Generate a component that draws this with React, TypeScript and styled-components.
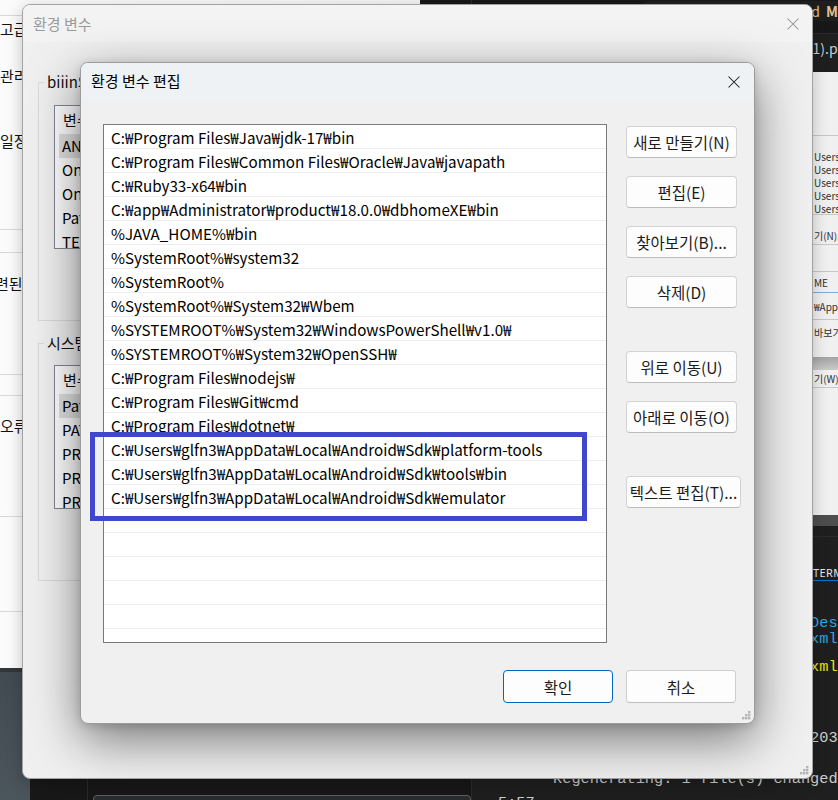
import React from 'react';
import styled, { createGlobalStyle } from 'styled-components';

const KR = `"Noto Sans CJK KR", "Noto Sans", sans-serif`;
const MONO = `"Liberation Mono", "DejaVu Sans Mono", monospace`;

const GlobalStyle = createGlobalStyle`
  html, body { margin: 0; padding: 0; background: #1f1f1f; }
  body { width: 838px; height: 800px; overflow: hidden; }
  #root { width: 838px; height: 800px; }
  * { box-sizing: border-box; }
`;

const Desktop = styled.div`
  position: relative;
  width: 838px;
  height: 800px;
  overflow: hidden;
  font-family: ${KR};
  background: linear-gradient(190deg, #24292d 0%, #2c3236 55%, #4b555c 100%);
`;

/* ---------------- VS Code window (background) ---------------- */
const CodeWindow = styled.div`
  position: absolute;
  left: 30px;
  top: 0;
  width: 808px;
  height: 800px;
  display: grid;
  grid-template-columns: 58px 384px 1fr;
  background: #1f1f1f;
  overflow: hidden;
`;

const ActivityBar = styled.div`
  background: #181818;
  border-right: 1px solid #2b2b2b;
  display: flex;
  flex-direction: column;
  justify-content: flex-end;
  align-items: center;
`;

const AccountSlot = styled.div`
  margin-bottom: -14px;
  margin-right: 4px;
  display: flex;
`;

const SideBar = styled.div`
  background: #181818;
  border-right: 1px solid #2b2b2b;
  display: flex;
  flex-direction: column;
  justify-content: flex-end;
`;

const FileRow = styled.div`
  margin: 0 0 -8px 5px;
  height: 24px;
  border: 1px solid #5f5f5f;
  border-radius: 4px;
  background: #2a2d2e;
  display: flex;
  align-items: center;
  gap: 6px;
  padding-left: 58px;
`;

const FileName = styled.span`
  font-size: 14px;
  color: #cccccc;
  white-space: nowrap;
`;

const Editor = styled.div`
  display: flex;
  flex-direction: column;
  min-width: 0;
`;

const TabBar = styled.div`
  height: 34px;
  background: #181818;
  border-bottom: 1px solid #2b2b2b;
  display: flex;
  justify-content: flex-end;
  align-items: flex-start;
  padding-top: 1px;
`;

const Tab = styled.div`
  display: flex;
  align-items: center;
  gap: 6px;
  line-height: 20px;
  font-size: 14px;
  color: #e2c08d;
  white-space: nowrap;
  background: #1f1f1f;
  padding-left: 12px;
`;

const TabBadge = styled.span`
  font-weight: 600;
`;

const Breadcrumb = styled.div`
  height: 28px;
  display: flex;
  justify-content: flex-end;
  align-items: center;
  font-size: 14px;
  color: #c8ccd2;
  white-space: nowrap;
`;

const Crumb = styled.span`
  margin-right: -16px;
`;

const EditorArea = styled.div`
  height: 474px;
  padding-top: 10px;
  display: flex;
`;

const Preview = styled.div`
  margin-left: 330px;
  width: 300px;
  height: 454px;
  background: #f0f0f0;
  display: flex;
  flex-direction: column;
  overflow: hidden;
`;

const PreviewRow = styled.div<{ $h: number; $line?: string; $bg?: string }>`
  flex: none;
  height: ${(p) => p.$h}px;
  border-bottom: ${(p) => (p.$line ? `1px solid ${p.$line}` : 'none')};
  background: ${(p) => p.$bg || 'transparent'};
  padding-left: 12px;
  display: flex;
  align-items: center;
  font-size: 10px;
  color: #303030;
  white-space: nowrap;
`;

const Panel = styled.div`
  flex: 1;
  border-top: 1px solid #2b2b2b;
  display: flex;
  flex-direction: column;
`;

const PanelHeader = styled.div`
  height: 44px;
  display: flex;
  align-items: flex-end;
  gap: 22px;
  padding-left: 341px;
`;

const PanelTab = styled.span<{ $active?: boolean }>`
  font-family: "Noto Sans", sans-serif;
  font-size: 11px;
  letter-spacing: 0.4px;
  line-height: 14px;
  color: ${(p) => (p.$active ? '#e7e7e7' : '#9d9d9d')};
  border-bottom: 1px solid ${(p) => (p.$active ? '#0078d4' : 'transparent')};
  white-space: nowrap;
`;

const Terminal = styled.div`
  padding: 0 0 0 26px;
  font-family: ${MONO};
  font-size: 15.3px;
  color: #cccccc;
`;

const TermLine = styled.div<{ $mt: number }>`
  height: 16px;
  line-height: 16px;
  margin-top: ${(p) => p.$mt}px;
  white-space: pre;
`;

const TermColor = styled.span<{ $c: string }>`
  color: ${(p) => p.$c};
`;

/* ---------------- System properties window (background) ---------------- */
const BackWindow = styled.div`
  position: absolute;
  left: -20px;
  top: 0;
  width: 440px;
  height: 672px;
  background: linear-gradient(90deg, #fbfbfb 0%, #f4f4f4 100%);
  border-bottom: 4px solid #333538;
  display: flex;
  flex-direction: column;
`;

const BackRow = styled.div<{ $h: number; $line?: boolean; $indent?: number }>`
  flex: none;
  height: ${(p) => p.$h}px;
  border-bottom: ${(p) => (p.$line ? '1px solid #d8d8d8' : 'none')};
  padding-left: ${(p) => 20 + (p.$indent || 0)}px;
  display: flex;
  align-items: center;
  font-size: 15px;
  color: #111;
  white-space: nowrap;
`;

/* ---------------- Outer dialog: 환경 변수 ---------------- */
const OuterWindow = styled.div`
  position: absolute;
  left: 22px;
  top: 4px;
  width: 791px;
  height: 775px;
  background: #f0f0f0;
  border: 1px solid #a3a3a3;
  border-radius: 8px;
  box-shadow: 0 4px 16px rgba(0, 0, 0, 0.22);
  display: flex;
  flex-direction: column;
  overflow: hidden;
`;

const OuterTitleBar = styled.div`
  flex: none;
  height: 37px;
  background: #f3f3f3;
  display: flex;
  align-items: center;
  justify-content: space-between;
  padding: 0 13px 0 10px;
`;

const OuterTitle = styled.span`
  font-size: 15px;
  color: #9a9a9a;
`;

const OuterBody = styled.div`
  padding: 30px 15px 0 15px;
  display: flex;
  flex-direction: column;
  gap: 12px;
`;

const GroupBox = styled.fieldset<{ $h: number; $pt: number }>`
  margin: 0;
  width: 690px;
  height: ${(p) => p.$h}px;
  padding: ${(p) => p.$pt}px 0 0 0;
  border: 1px solid #dadada;
  min-width: 0;
`;

const GroupLegend = styled.legend`
  margin-left: 5px;
  padding: 0 3px;
  font-size: 15px;
  line-height: 20px;
  color: #111;
  white-space: nowrap;
`;

const ListView = styled.div`
  margin-left: 15px;
  height: 144px;
  width: 640px;
  background: #ffffff;
  border: 1px solid #828790;
  overflow: hidden;
`;

const ListHeader = styled.div`
  height: 28px;
  line-height: 28px;
  padding-left: 8px;
  font-size: 15px;
  color: #111;
`;

const ListItem = styled.div<{ $sel?: boolean }>`
  height: 24px;
  line-height: 24px;
  margin-left: 4px;
  padding-left: 3px;
  font-size: 15px;
  color: #000;
  background: ${(p) => (p.$sel ? '#e1e1e1' : 'transparent')};
  white-space: nowrap;
`;

/* ---------------- Inner dialog: 환경 변수 편집 ---------------- */
const InnerWindow = styled.div`
  position: absolute;
  left: 80px;
  top: 62px;
  width: 675px;
  height: 662px;
  background: #f0f0f0;
  border: 1px solid #9c9c9c;
  border-radius: 8px;
  box-shadow: 0 16px 50px rgba(0, 0, 0, 0.5), 0 2px 10px rgba(0, 0, 0, 0.15);
  display: flex;
  flex-direction: column;
  overflow: hidden;
`;

const InnerTitleBar = styled.div`
  flex: none;
  height: 37px;
  background: #eef2f5;
  display: flex;
  align-items: center;
  justify-content: space-between;
  padding: 0 14px 0 10px;
`;

const InnerTitle = styled.span`
  font-size: 15px;
  color: #000;
  margin-top: -2px;
`;

const InnerBody = styled.div`
  display: flex;
  padding: 24px 0 0 22px;
  gap: 19px;
`;

const PathList = styled.div`
  width: 504px;
  height: 519px;
  background: #ffffff;
  border: 1px solid #7a7a7a;
  overflow: hidden;
`;

const PathRow = styled.div`
  height: 24px;
  line-height: 24px;
  border-bottom: 1px solid #ededed;
  padding-left: 7px;
  font-size: 15.2px;
  color: #000;
  white-space: nowrap;
`;

const ButtonColumn = styled.div`
  padding-top: 2px;
  display: flex;
  flex-direction: column;
  gap: 43px;
`;

const ButtonGroup = styled.div`
  display: flex;
  flex-direction: column;
  gap: 18px;
  align-items: flex-start;
`;

const Btn = styled.button<{ $wide?: boolean }>`
  height: 32px;
  width: ${(p) => (p.$wide ? 115 : 111)}px;
  padding: 0;
  font-family: ${KR};
  font-size: 15.5px;
  color: #1b1b1b;
  background: #fdfdfd;
  border: 1px solid #d3d3d3;
  border-bottom-color: #bcbcbc;
  border-radius: 4px;
  white-space: nowrap;
`;

const Footer = styled.div`
  margin-top: 27px;
  display: flex;
  justify-content: flex-end;
  gap: 13px;
  padding-right: 18px;
`;

const FooterBtn = styled.button<{ $primary?: boolean }>`
  height: 33px;
  width: 110px;
  padding: 0;
  font-family: ${KR};
  font-size: 15.5px;
  color: #1b1b1b;
  background: #fdfdfd;
  border: 1px solid ${(p) => (p.$primary ? '#0067c0' : '#cfcfcf')};
  border-bottom-color: ${(p) => (p.$primary ? '#0067c0' : '#bdbdbd')};
  border-radius: 4px;
`;

const Grip = styled.svg`
  position: absolute;
  right: 3px;
  bottom: 3px;
`;

const Annotation = styled.div`
  position: absolute;
  left: 90px;
  top: 432px;
  width: 497px;
  height: 89px;
  border: 5px solid #3f48cc;
`;

/* ---------------- data ---------------- */
const pathEntries = [
  'C:₩Program Files₩Java₩jdk-17₩bin',
  'C:₩Program Files₩Common Files₩Oracle₩Java₩javapath',
  'C:₩Ruby33-x64₩bin',
  'C:₩app₩Administrator₩product₩18.0.0₩dbhomeXE₩bin',
  '%JAVA_HOME%₩bin',
  '%SystemRoot%₩system32',
  '%SystemRoot%',
  '%SystemRoot%₩System32₩Wbem',
  '%SYSTEMROOT%₩System32₩WindowsPowerShell₩v1.0₩',
  '%SYSTEMROOT%₩System32₩OpenSSH₩',
  'C:₩Program Files₩nodejs₩',
  'C:₩Program Files₩Git₩cmd',
  'C:₩Program Files₩dotnet₩',
  'C:₩Users₩glfn3₩AppData₩Local₩Android₩Sdk₩platform-tools',
  'C:₩Users₩glfn3₩AppData₩Local₩Android₩Sdk₩tools₩bin',
  'C:₩Users₩glfn3₩AppData₩Local₩Android₩Sdk₩emulator',
];
const pathRows = [...pathEntries, ...Array(6).fill('')];

const backRows: { h: number; t?: string; line?: boolean; indent?: number }[] = [
  { h: 16, line: true },
  { h: 24, t: '고급' },
  { h: 23 },
  { h: 24, t: '관리' },
  { h: 41 },
  { h: 24, t: '일정' },
  { h: 78, line: true },
  { h: 23, line: true },
  { h: 18 },
  { h: 24, t: '련된', indent: -5 },
  { h: 80, line: true },
  { h: 21, line: true },
  { h: 17 },
  { h: 24, t: '오류' },
  { h: 80, line: true },
  { h: 95, line: true },
  { h: 56 },
];

const previewRows: { h: number; t?: string; line?: string; bg?: string }[] = [
  { h: 64, line: '#c8c8c8' },
  { h: 14 },
  { h: 13, t: 'Users₩' },
  { h: 13, t: 'Users₩' },
  { h: 13, t: 'Users₩' },
  { h: 13, t: 'Users₩' },
  { h: 13, t: 'Users₩', line: '#c8c8c8' },
  { h: 12 },
  { h: 18, t: '기(N)...', line: '#c8c8c8' },
  { h: 27, line: '#c8c8c8' },
  { h: 21, t: 'ME', line: '#7fa9d6' },
  { h: 27, t: '₩Appl', line: '#c8c8c8' },
  { h: 25, t: '바보기(' },
  { h: 12 },
  { h: 13, bg: 'linear-gradient(#a3a3a3, #c9c9c9)' },
  { h: 18, t: '기(W)...', line: '#c8c8c8' },
  { h: 127 },
  { h: 11, bg: '#4d4d4d' },
];

const pad = (s: string) => s.padEnd(34, ' ');

const termLines: { mt: number; pre: string; post: string; c: string }[] = [
  { mt: 34, pre: pad('Warning: SDK processing. This ver'), post: 'Description', c: '#29a9e0' },
  { mt: 0, pre: pad('  at jdk.internal.reflect.Native'), post: 'xml', c: '#29a9e0' },
  { mt: 12, pre: pad('  Warning: unexpected element (ur'), post: 'xml', c: '#e5e510' },
  { mt: 55, pre: pad('Performing hot restart...   2024-'), post: '203', c: '#cccccc' },
  { mt: 25, pre: '      Regenerating: 1 file(s) chan', post: 'ged', c: '#cccccc' },
  { mt: 8, pre: '5:57', post: '', c: '#cccccc' },
];

const groups = [
  {
    legend: 'biiin의 사용자 변수(U)',
    h: 249,
    pt: 13,
    items: ['ANDROID_HOME', 'OneDrive', 'OneDriveConsumer', 'Path', 'TEMP', 'TMP'],
  },
  {
    legend: '시스템 변수(S)',
    h: 248,
    pt: 12,
    items: ['Path', 'PATHEXT', 'PROCESSOR_ARCHITECTURE', 'PROCESSOR_IDENTIFIER', 'PROCESSOR_LEVEL', 'PROCESSOR_REVISION'],
  },
];

const CloseIcon = ({ color }: { color: string }) => (
  <svg width="12" height="12" viewBox="0 0 12 12">
    <path d="M0.5 0.5L11.5 11.5M11.5 0.5L0.5 11.5" stroke={color} strokeWidth="1.05" fill="none" />
  </svg>
);

const GripIcon = () => (
  <Grip width="10" height="10" viewBox="0 0 10 10">
    {[
      [7, 1],
      [4, 4],
      [7, 4],
      [1, 7],
      [4, 7],
      [7, 7],
    ].map(([x, y], i) => (
      <rect key={i} x={x} y={y} width="2.4" height="2.4" fill="#b4b4b4" />
    ))}
  </Grip>
);

const AccountIcon = () => (
  <svg width="24" height="24" viewBox="0 0 24 24" fill="none" stroke="#858585" strokeWidth="1.4">
    <circle cx="12" cy="12" r="10.5" />
    <circle cx="12" cy="9.5" r="3.6" />
    <path d="M5 19c1.6-2.8 4.1-4 7-4s5.4 1.2 7 4" />
  </svg>
);

const ImageFileIcon = () => (
  <svg width="16" height="16" viewBox="0 0 16 16" fill="none" stroke="#9a9a9a" strokeWidth="1.2">
    <rect x="1.5" y="2.5" width="13" height="11" rx="1.5" />
    <path d="M3 12l3.5-4 2.5 2.5 2-2 2.5 3.5" />
  </svg>
);

export default function App() {
  return (
    <>
      <GlobalStyle />
      <Desktop>
        <CodeWindow>
          <ActivityBar>
            <AccountSlot>
              <AccountIcon />
            </AccountSlot>
          </ActivityBar>
          <SideBar>
            <FileRow>
              <ImageFileIcon />
              <FileName>lmine생성(1).png</FileName>
            </FileRow>
          </SideBar>
          <Editor>
            <TabBar>
              <Tab>
                <span>인공지능 개발 분야 정리.md</span>
                <TabBadge>M</TabBadge>
              </Tab>
            </TabBar>
            <Breadcrumb>
              <Crumb>lmine생성(1).png</Crumb>
            </Breadcrumb>
            <EditorArea>
              <Preview>
                {previewRows.map((r, i) => (
                  <PreviewRow key={i} $h={r.h} $line={r.line} $bg={r.bg}>
                    {r.t}
                  </PreviewRow>
                ))}
              </Preview>
            </EditorArea>
            <Panel>
              <PanelHeader>
                <PanelTab $active>TERMINAL</PanelTab>
                <PanelTab>PORTS</PanelTab>
              </PanelHeader>
              <Terminal>
                {termLines.map((l, i) => (
                  <TermLine key={i} $mt={l.mt}>
                    {l.pre}
                    <TermColor $c={l.c}>{l.post}</TermColor>
                  </TermLine>
                ))}
              </Terminal>
            </Panel>
          </Editor>
        </CodeWindow>

        <BackWindow>
          {backRows.map((r, i) => (
            <BackRow key={i} $h={r.h} $line={r.line} $indent={r.indent}>
              {r.t}
            </BackRow>
          ))}
        </BackWindow>

        <OuterWindow>
          <OuterTitleBar>
            <OuterTitle>환경 변수</OuterTitle>
            <CloseIcon color="#8f8f8f" />
          </OuterTitleBar>
          <OuterBody>
            {groups.map((g) => (
              <GroupBox key={g.legend} $h={g.h} $pt={g.pt}>
                <GroupLegend>{g.legend}</GroupLegend>
                <ListView>
                  <ListHeader>변수</ListHeader>
                  {g.items.map((it, i) => (
                    <ListItem key={it} $sel={i === 0}>
                      {it}
                    </ListItem>
                  ))}
                </ListView>
              </GroupBox>
            ))}
          </OuterBody>
          <GripIcon />
        </OuterWindow>

        <InnerWindow>
          <InnerTitleBar>
            <InnerTitle>환경 변수 편집</InnerTitle>
            <CloseIcon color="#1a1a1a" />
          </InnerTitleBar>
          <InnerBody>
            <PathList>
              {pathRows.map((p, i) => (
                <PathRow key={i}>{p || '\u00a0'}</PathRow>
              ))}
            </PathList>
            <ButtonColumn>
              <ButtonGroup>
                <Btn>새로 만들기(N)</Btn>
                <Btn>편집(E)</Btn>
                <Btn>찾아보기(B)...</Btn>
                <Btn>삭제(D)</Btn>
              </ButtonGroup>
              <ButtonGroup>
                <Btn>위로 이동(U)</Btn>
                <Btn>아래로 이동(O)</Btn>
              </ButtonGroup>
              <ButtonGroup>
                <Btn $wide>텍스트 편집(T)...</Btn>
              </ButtonGroup>
            </ButtonColumn>
          </InnerBody>
          <Footer>
            <FooterBtn $primary>확인</FooterBtn>
            <FooterBtn>취소</FooterBtn>
          </Footer>
          <GripIcon />
        </InnerWindow>

        <Annotation />
      </Desktop>
    </>
  );
}
